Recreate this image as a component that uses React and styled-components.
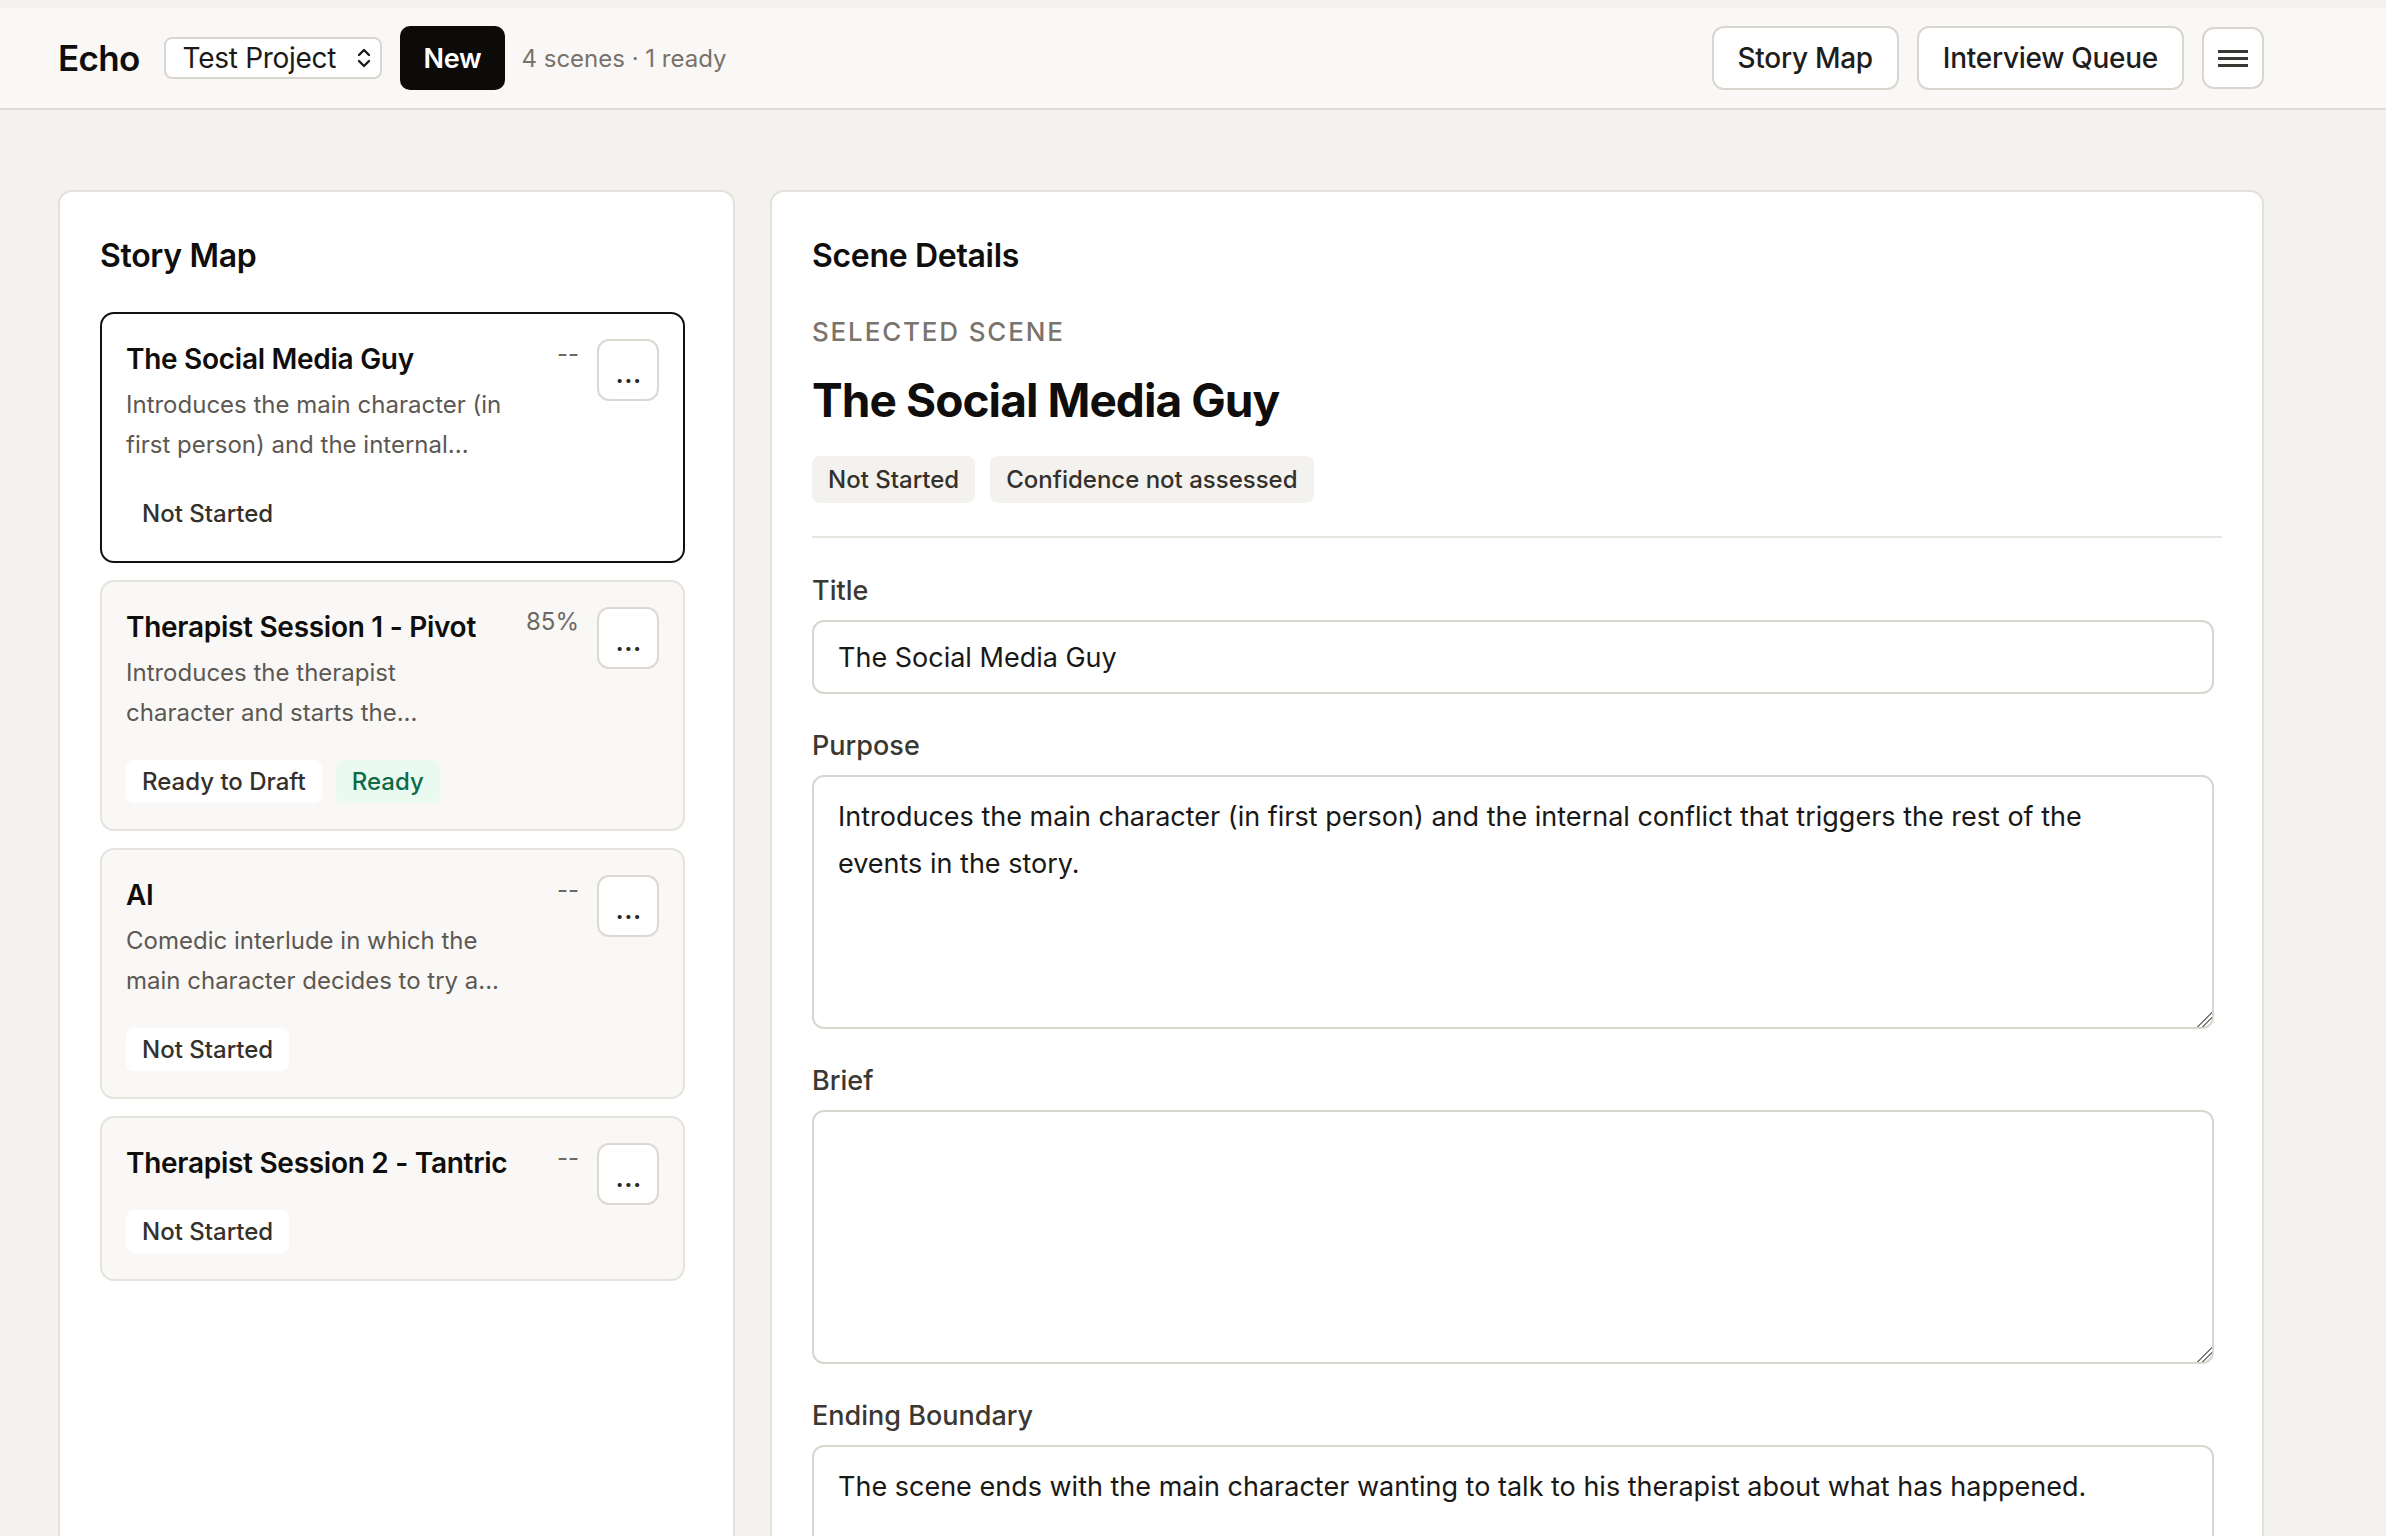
import React from "react";
import styled, { createGlobalStyle } from "styled-components";

const scenes = [
  {
    id: 1,
    title: "The Social Media Guy",
    summary: "Introduces the main character (in first person) and the internal...",
    purpose:
      "Introduces the main character (in first person) and the internal conflict that triggers the rest of the events in the story.",
    meta: "--",
    badges: [{ label: "Not Started" }],
  },
  {
    id: 2,
    title: "Therapist Session 1 - Pivot",
    summary: "Introduces the therapist character and starts the...",
    meta: "85%",
    badges: [{ label: "Ready to Draft" }, { label: "Ready", tone: "ready" }],
  },
  {
    id: 3,
    title: "AI",
    summary: "Comedic interlude in which the main character decides to try a...",
    meta: "--",
    badges: [{ label: "Not Started" }],
  },
  {
    id: 4,
    title: "Therapist Session 2 - Tantric",
    summary: null,
    meta: "--",
    badges: [{ label: "Not Started" }],
  },
];

export default function App() {
  const selected = scenes[0];

  return (
    <>
      <GlobalStyle />
      <TopBar>
        <BarGroup>
          <Brand>Echo</Brand>
          <ProjectSelect>
            Test Project
            <svg width="16" height="24" viewBox="0 0 16 24" fill="none">
              <path d="M3 9 8 4 13 9" stroke="#1c1a18" strokeWidth="2.4" strokeLinecap="round" strokeLinejoin="round" />
              <path d="M3 15 8 20 13 15" stroke="#1c1a18" strokeWidth="2.4" strokeLinecap="round" strokeLinejoin="round" />
            </svg>
          </ProjectSelect>
          <PrimaryButton>New</PrimaryButton>
          <Summary>4 scenes · 1 ready</Summary>
        </BarGroup>
        <BarGroup>
          <OutlineButton>Story Map</OutlineButton>
          <OutlineButton>Interview Queue</OutlineButton>
          <IconButton aria-label="Menu">
            <svg width="32" height="24" viewBox="0 0 32 24">
              <rect x="1" y="4" width="30" height="3" fill="#3b3833" />
              <rect x="1" y="11" width="30" height="3" fill="#3b3833" />
              <rect x="1" y="18" width="30" height="3" fill="#3b3833" />
            </svg>
          </IconButton>
        </BarGroup>
      </TopBar>

      <Main>
        <Panel $right={48}>
          <PanelTitle>Story Map</PanelTitle>
          <CardList>
            {scenes.map((s) => (
              <SceneCard key={s.id} $selected={s.id === selected.id}>
                <CardBody>
                  <CardTitle>{s.title}</CardTitle>
                  {s.summary && <CardDesc>{s.summary}</CardDesc>}
                  <BadgeRow $top={27}>
                    {s.badges.map((b) => (
                      <Badge key={b.label} $tone={b.tone || "plain"}>
                        {b.label}
                      </Badge>
                    ))}
                  </BadgeRow>
                </CardBody>
                <CardSide>
                  <Meta>{s.meta}</Meta>
                  <MoreButton>...</MoreButton>
                </CardSide>
              </SceneCard>
            ))}
          </CardList>
        </Panel>

        <Panel>
          <PanelTitle>Scene Details</PanelTitle>
          <Eyebrow>Selected Scene</Eyebrow>
          <SceneTitle>{selected.title}</SceneTitle>
          <BadgeRow $gap={15} $top={27}>
            <Badge $tone="muted" $tall>Not Started</Badge>
            <Badge $tone="muted" $tall>Confidence not assessed</Badge>
          </BadgeRow>
          <Divider />
          <Form>
            <Field>
              <Label>Title</Label>
              <TextInput defaultValue={selected.title} />
            </Field>
            <Field>
              <Label>Purpose</Label>
              <TextArea defaultValue={selected.purpose} />
            </Field>
            <Field>
              <Label>Brief</Label>
              <TextArea defaultValue="" />
            </Field>
            <Field>
              <Label>Ending Boundary</Label>
              <TextArea defaultValue="The scene ends with the main character wanting to talk to his therapist about what has happened." />
            </Field>
          </Form>
        </Panel>
      </Main>
    </>
  );
}

const GlobalStyle = createGlobalStyle`
  html, body {
    margin: 0;
    height: 100%;
    overflow: hidden;
  }
  body {
    background: #f4f2ee;
    font-family: Inter, "Noto Sans", sans-serif;
    color: #0f0e0d;
    -webkit-font-smoothing: antialiased;
  }
  * {
    box-sizing: border-box;
  }
`;

const TopBar = styled.header`
  display: flex;
  justify-content: space-between;
  align-items: center;
  margin-top: 8px;
  height: 102px;
  padding: 0 122px 0 58px;
  background: #f9f8f6;
  border-bottom: 2px solid #dfdbd5;
`;

const BarGroup = styled.div`
  display: flex;
  align-items: center;
  gap: 18px;
`;

const Brand = styled.div`
  font-size: 35px;
  font-weight: 600;
  letter-spacing: -0.02em;
  margin-right: 6px;
`;

const ProjectSelect = styled.div`
  display: flex;
  align-items: center;
  justify-content: space-between;
  width: 218px;
  height: 42px;
  padding: 0 8px 0 17px;
  background: #fff;
  border: 2px solid #dad6d0;
  border-radius: 8px;
  font-size: 28px;
  letter-spacing: -0.01em;
  color: #1c1a18;
`;

const PrimaryButton = styled.button`
  height: 64px;
  padding: 0 24px;
  background: #0c0b09;
  color: #fff;
  border: none;
  border-radius: 10px;
  font-family: inherit;
  font-size: 27px;
  font-weight: 600;
  letter-spacing: -0.01em;
`;

const Summary = styled.span`
  margin-left: -2px;
  font-size: 24px;
  color: #78726b;
`;

const OutlineButton = styled.button`
  height: 64px;
  padding: 0 24px;
  background: #fff;
  color: #1f1d1b;
  border: 2px solid #d9d5cf;
  border-radius: 12px;
  font-family: inherit;
  font-size: 28px;
  font-weight: 500;
  letter-spacing: -0.01em;
`;

const IconButton = styled.button`
  display: flex;
  align-items: center;
  justify-content: center;
  width: 62px;
  height: 62px;
  padding: 0;
  background: #fff;
  border: 2px solid #d9d5cf;
  border-radius: 12px;
`;

const Main = styled.main`
  display: grid;
  grid-template-columns: 677px 1fr;
  gap: 35px;
  padding: 80px 122px 0 58px;
`;

const Panel = styled.section`
  min-height: 1500px;
  padding: 40px ${(p) => p.$right || 40}px 40px 40px;
  background: #fff;
  border: 2px solid #e4e0da;
  border-radius: 14px;
`;

const PanelTitle = styled.h2`
  margin: 0;
  font-size: 32px;
  font-weight: 600;
  line-height: 48px;
  letter-spacing: -0.01em;
`;

const CardList = styled.div`
  display: flex;
  flex-direction: column;
  gap: 17px;
  margin-top: 32px;
`;

const SceneCard = styled.article`
  display: flex;
  gap: 18px;
  padding: 25px 24px 26px;
  background: ${(p) => (p.$selected ? "#fff" : "#f9f8f6")};
  border: 2px solid ${(p) => (p.$selected ? "#111" : "#e6e3de")};
  border-radius: 14px;
`;

const CardBody = styled.div`
  flex: 1;
  min-width: 0;
`;

const CardTitle = styled.h3`
  margin: 0;
  font-size: 28px;
  font-weight: 600;
  line-height: 40px;
  letter-spacing: -0.01em;
`;

const CardDesc = styled.p`
  margin: 6px 0 0;
  max-width: 380px;
  font-size: 24px;
  line-height: 40px;
  color: #5d5852;
`;

const BadgeRow = styled.div`
  display: flex;
  flex-wrap: wrap;
  gap: ${(p) => p.$gap || 14}px;
  margin-top: ${(p) => p.$top || 26}px;
`;

const badgeTones = {
  plain: { bg: "#fff", fg: "#34302c" },
  muted: { bg: "#f3f2ef", fg: "#34302c" },
  ready: { bg: "#eafaf1", fg: "#0f6b47" },
};

const Badge = styled.span`
  display: inline-flex;
  align-items: center;
  height: ${(p) => (p.$tall ? 47 : 43)}px;
  padding: 0 16px;
  border-radius: 8px;
  background: ${(p) => badgeTones[p.$tone].bg};
  color: ${(p) => badgeTones[p.$tone].fg};
  font-size: 24px;
  font-weight: 500;
`;

const CardSide = styled.div`
  display: flex;
  align-items: flex-start;
  gap: 18px;
`;

const Meta = styled.span`
  font-size: 24px;
  line-height: 30px;
  color: #6e6862;
`;

const MoreButton = styled.button`
  display: flex;
  align-items: center;
  justify-content: center;
  width: 62px;
  height: 62px;
  padding: 10px 0 0 2px;
  background: #fff;
  border: 2px solid #dcd8d2;
  border-radius: 12px;
  font-family: inherit;
  font-size: 22px;
  font-weight: 800;
  letter-spacing: 1px;
  color: #2a2724;
`;

const Eyebrow = styled.div`
  margin-top: 34px;
  font-size: 26px;
  font-weight: 500;
  line-height: 36px;
  letter-spacing: 0.07em;
  text-transform: uppercase;
  color: #7a746d;
`;

const SceneTitle = styled.h1`
  margin: 21px 0 0;
  font-size: 46px;
  font-weight: 700;
  line-height: 58px;
  letter-spacing: -0.02em;
`;

const Divider = styled.hr`
  margin: 33px 0 0;
  border: none;
  border-top: 2px solid #e8e5e0;
`;

const Form = styled.div`
  display: flex;
  flex-direction: column;
  gap: 34px;
  margin-top: 35px;
  padding-right: 8px;
`;

const Field = styled.label`
  display: flex;
  flex-direction: column;
  gap: 11px;
`;

const Label = styled.span`
  font-size: 27px;
  font-weight: 500;
  line-height: 36px;
  color: #3b3732;
`;

const TextInput = styled.input`
  height: 74px;
  padding: 0 24px;
  background: #fff;
  border: 2px solid #d9d5cf;
  border-radius: 12px;
  font-family: inherit;
  font-size: 27px;
  color: #1a1816;
  outline: none;
`;

const TextArea = styled.textarea`
  height: 254px;
  padding: 16px 40px 16px 24px;
  background: #fff;
  border: 2px solid #d9d5cf;
  border-radius: 12px;
  font-family: inherit;
  font-size: 27px;
  line-height: 47px;
  color: #1a1816;
  resize: vertical;
  outline: none;

  &::-webkit-scrollbar {
    width: 22px;
    height: 22px;
  }
  &::-webkit-resizer {
    background: linear-gradient(
      135deg,
      transparent 0 47%,
      #7d7872 47% 54%,
      transparent 54% 66%,
      #7d7872 66% 73%,
      transparent 73%
    );
  }
`;
